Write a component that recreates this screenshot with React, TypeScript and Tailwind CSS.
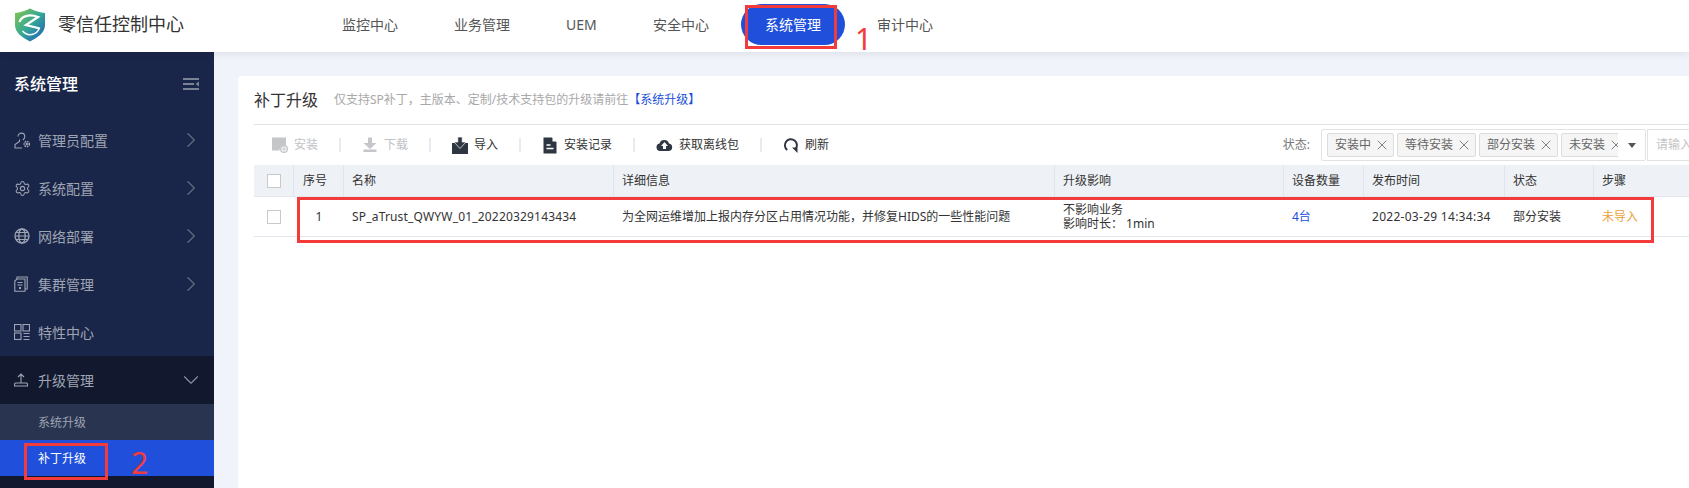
import { ChevronDown, ChevronRight, Settings, X } from 'lucide-react'
import type { ReactNode } from 'react'

const navItems = ['监控中心', '业务管理', 'UEM', '安全中心', '系统管理', '审计中心']
const tags = ['安装中', '等待安装', '部分安装', '未安装']

function Logo() {
  return (
    <svg width="32" height="34" viewBox="0 0 32 34" className="shrink-0">
      <defs>
        <linearGradient id="shield" x1="0" y1="0" x2="1" y2="1">
          <stop offset="0" stopColor="#86c648" />
          <stop offset="0.5" stopColor="#35a896" />
          <stop offset="1" stopColor="#1c58bd" />
        </linearGradient>
      </defs>
      <path d="M1 5 C6 4.5 11 3 16 0.5 C21 3 26 4.5 31 5 L31 17 C31 25 23 30 16 33.5 C9 30 1 25 1 17 Z" fill="url(#shield)" />
      <path d="M5.5 14 C7 8.5 15 5.5 24 9 L12 17 L26 20.5" fill="none" stroke="#fff" strokeWidth="2.3" />
      <path d="M25 21 C22 27 14 29 8.5 23" fill="none" stroke="#fff" strokeWidth="1.5" />
    </svg>
  )
}

function AdminIcon() {
  return (
    <svg width="17" height="17" viewBox="0 0 17 17" fill="none" stroke="currentColor" strokeWidth="1.1">
      <path d="M4 4.5 A3.4 3.4 0 0 1 10.8 4.5 C10.8 6 10 7 9 8" />
      <path d="M5.5 7.5 L5.5 9.5 L1 12.5 L1 16 L8 16" />
      <circle cx="12.8" cy="12" r="2.6" strokeDasharray="1.6 0.8" strokeWidth="1.5" />
      <circle cx="12.8" cy="12" r="0.7" />
    </svg>
  )
}

function GlobeIcon() {
  return (
    <svg width="16" height="16" viewBox="0 0 16 16" fill="none" stroke="currentColor" strokeWidth="1.3">
      <circle cx="8" cy="8" r="7" />
      <ellipse cx="8" cy="8" rx="3.2" ry="7" />
      <path d="M1 8 H15 M2 4.5 H14 M2 11.5 H14" strokeWidth="1.1" />
    </svg>
  )
}

function ClusterIcon() {
  return (
    <svg width="14" height="16" viewBox="0 0 14 16" fill="none" stroke="currentColor" strokeWidth="1.1">
      <path d="M3 3 L3 1 L13.2 1 L13.2 13 L11 13" />
      <path d="M3 3 H11 V15.2 H0.8 V5 Z" />
      <path d="M3.5 6.5 H8.5 M3.5 9 H8.5" />
      <rect x="5" y="11" width="2" height="2" fill="currentColor" stroke="none" />
    </svg>
  )
}

function FeatureIcon() {
  return (
    <svg width="16" height="16" viewBox="0 0 16 16" fill="none" stroke="currentColor" strokeWidth="1.1">
      <rect x="0.5" y="0.5" width="6.5" height="6.5" />
      <rect x="9" y="0.5" width="6.5" height="6.5" />
      <rect x="0.5" y="9" width="6.5" height="6.5" />
      <path d="M9.5 9.5 H15.5 M9.5 12.5 H15.5 M9.5 15.5 H15.5" />
    </svg>
  )
}

function UploadIcon() {
  return (
    <svg width="14" height="14" viewBox="0 0 14 14" fill="none" stroke="currentColor" strokeWidth="1.1">
      <path d="M7 10 L7 1 M4 4 L7 1 L10 4" />
      <path d="M0.5 13 V11.5 C0.5 10.5 1 10 2 10 H12 C13 10 13.5 10.5 13.5 11.5 V13 Z" />
    </svg>
  )
}

function CollapseIcon() {
  return (
    <svg width="16" height="12" viewBox="0 0 16 12" fill="#7b8295">
      <rect x="0" y="0" width="16" height="2" />
      <rect x="0" y="5" width="11" height="2" />
      <rect x="0" y="10" width="16" height="2" />
      <path d="M16 3.5 L12.5 6 L16 8.5 Z" />
    </svg>
  )
}

function InstallIcon() {
  return (
    <svg width="16" height="16" viewBox="0 0 16 16">
      <path d="M0 0.5 H14 V8.5 A5 5 0 0 0 7.5 13.5 H0 Z" fill="#c4c6c9" />
      <circle cx="12" cy="12" r="3.3" fill="none" stroke="#c4c6c9" strokeWidth="1.4" />
      <path d="M10.2 12 H13.8 M12 10.2 V13.8" stroke="#c4c6c9" strokeWidth="1.2" />
    </svg>
  )
}

function DownloadIcon() {
  return (
    <svg width="16" height="16" viewBox="0 0 16 16" fill="#c4c6c9">
      <path d="M6 0.5 H10 V6 H14.5 L8 12 L1.5 6 H6 Z" />
      <rect x="1.5" y="12.5" width="13" height="2.5" />
    </svg>
  )
}

function ImportIcon() {
  return (
    <svg width="16" height="17" viewBox="0 0 16 17" fill="#2e3642">
      <path d="M0 6 H5 L8 10 L11 6 H16 V17 H0 Z" />
      <path d="M5.8 0 H10.2 V5 H14 L8 11.5 L2 5 H5.8 Z" stroke="#fff" strokeWidth="0.7" />
    </svg>
  )
}

function RecordIcon() {
  return (
    <svg width="16" height="17" viewBox="0 0 16 17">
      <path d="M1.5 0.5 H10 L14.5 5 V16.5 H1.5 Z" fill="#2e3642" />
      <path d="M4.5 8 H8.5 M4.5 11.5 H11.5" stroke="#fff" strokeWidth="1.4" />
      <path d="M10.5 0.5 L14.5 4.5 H10.5 Z" fill="#fff" />
    </svg>
  )
}

function CloudIcon() {
  return (
    <svg width="17" height="16" viewBox="0 0 17 16">
      <path d="M4 14 A3.8 3.8 0 0 1 3.5 6.5 A5 5 0 0 1 13 6.5 A3.8 3.8 0 0 1 13 14 Z" fill="#2e3642" />
      <path d="M8.5 5 L12 9 H10 V12 H7 V9 H5 Z" fill="#fff" />
    </svg>
  )
}

function RefreshIcon() {
  return (
    <svg width="16" height="16" viewBox="0 0 16 16" fill="none">
      <path d="M4.2 13 A6 6 0 1 1 12.6 12" stroke="#2e3642" strokeWidth="2" />
      <path d="M9 10.5 H14.5 V16 Z" fill="#2e3642" />
    </svg>
  )
}

function SideItem({ icon, label, open }: { icon: ReactNode; label: string; open?: boolean }) {
  return (
    <div className={`h-12 flex items-center text-[14px] text-[#9fa4b2] ${open ? 'bg-[#12182e]' : ''}`}>
      <div className="w-[38px] pl-[14px] flex items-center shrink-0">{icon}</div>
      <span className="flex-1">{label}</span>
      {open ? (
        <ChevronDown size={26} strokeWidth={1} className="mr-[10px] text-[#8c91a0]" />
      ) : label !== '特性中心' ? (
        <ChevronRight size={26} strokeWidth={1} className="mr-[10px] text-[#666d80]" />
      ) : null}
    </div>
  )
}

function ToolItem({ icon, label, disabled }: { icon: ReactNode; label: string; disabled?: boolean }) {
  return (
    <div className={`flex items-center gap-[6px] text-[12px] ${disabled ? 'text-[#c0c2c6]' : 'text-[#333]'}`}>
      {icon}
      <span>{label}</span>
    </div>
  )
}

function Sep() {
  return <div className="w-[2px] h-[14px] bg-[#e8ebef] mx-[21px]" />
}

function Checkbox() {
  return <div className="w-[14px] h-[14px] border border-[#c9c9c9] bg-white" />
}

export default function App() {
  return (
    <div
      className="relative w-[1689px] h-[488px] overflow-hidden flex flex-col bg-[#f0f3fa] text-[#333]"
      style={{ fontFamily: '"Noto Sans", "Noto Sans CJK SC", sans-serif' }}
    >
      <header className="h-[52px] shrink-0 bg-white flex items-center shadow-[0_2px_8px_rgba(0,0,0,0.08)] relative z-10">
        <div className="w-[318px] pl-[14px] -mt-[3px] flex items-center gap-[12px] shrink-0">
          <Logo />
          <span className="text-[18px] text-[#333]">零信任控制中心</span>
        </div>
        <nav className="flex items-center gap-2 -mt-[3px]">
          {navItems.map((item) =>
            item === '系统管理' ? (
              <div key={item} className="h-[41px] px-6 rounded-[21px] bg-[#2050db] text-white text-[14px] flex items-center">
                {item}
              </div>
            ) : (
              <div key={item} className="h-[41px] px-6 text-[#555] text-[14px] flex items-center">
                <span className={item === 'UEM' ? 'w-[31px]' : ''}>{item}</span>
              </div>
            ),
          )}
        </nav>
      </header>

      <div className="flex-1 flex min-h-0">
        <aside className="w-[214px] shrink-0 bg-[#1a2649] flex flex-col">
          <div className="h-[64px] pl-[14px] pr-[15px] flex items-center justify-between shrink-0">
            <span className="text-[16px] font-medium text-white">系统管理</span>
            <CollapseIcon />
          </div>
          <SideItem icon={<AdminIcon />} label="管理员配置" />
          <SideItem icon={<Settings size={17} strokeWidth={1.5} />} label="系统配置" />
          <SideItem icon={<GlobeIcon />} label="网络部署" />
          <SideItem icon={<ClusterIcon />} label="集群管理" />
          <SideItem icon={<FeatureIcon />} label="特性中心" />
          <SideItem icon={<UploadIcon />} label="升级管理" open />
          <div className="h-9 pl-[38px] pt-px flex items-center bg-[#293450] text-[12px] text-[#9fa4b2]">系统升级</div>
          <div className="h-9 pl-[38px] pt-px flex items-center bg-[#2050db] text-[12px] text-white">补丁升级</div>
          <div className="flex-1 bg-[#12182e]" />
        </aside>

        <main className="flex-1 min-w-0 pl-6 pt-6">
          <div className="h-full bg-white rounded-tl-[4px] pl-4 overflow-hidden">
            <div className="h-[49px] flex items-center border-b border-[#e3e3e3]">
              <span className="text-[16px] text-[#333]">补丁升级</span>
              <span className="ml-4 text-[12px] text-[#a8a8a8]">
                仅支持SP补丁，主版本、定制/技术支持包的升级请前往
                <span className="text-[#2050db]">【系统升级】</span>
              </span>
            </div>

            <div className="h-[40px] pl-[18px] flex items-center">
              <ToolItem icon={<InstallIcon />} label="安装" disabled />
              <Sep />
              <ToolItem icon={<DownloadIcon />} label="下载" disabled />
              <Sep />
              <ToolItem icon={<ImportIcon />} label="导入" />
              <Sep />
              <ToolItem icon={<RecordIcon />} label="安装记录" />
              <Sep />
              <ToolItem icon={<CloudIcon />} label="获取离线包" />
              <Sep />
              <ToolItem icon={<RefreshIcon />} label="刷新" />

              <div className="ml-auto flex items-center shrink-0">
                <span className="text-[12px] text-[#777] mr-[11px]">状态:</span>
                <div className="w-[325px] h-8 border border-[#e3e3e3] rounded-[2px] flex items-center pl-[5px]">
                  <div className="w-[291px] flex items-center gap-[3px] overflow-hidden">
                    {tags.map((tag) => (
                      <div
                        key={tag}
                        className="h-6 pl-[7px] pr-[3px] shrink-0 flex items-center gap-[3px] bg-[#f5f5f5] border border-[#dcdcdc] rounded-[2px] text-[12px] text-[#666]"
                      >
                        {tag}
                        <X size={16} strokeWidth={1.1} className="text-[#555]" />
                      </div>
                    ))}
                  </div>
                  <svg width="8" height="5" viewBox="0 0 8 5" className="ml-[10px]" fill="#555">
                    <path d="M0 0 H8 L4 5 Z" />
                  </svg>
                </div>
                <div className="ml-px w-[42px] h-8 border border-r-0 border-[#e3e3e3] flex items-center pl-[8px] text-[12px] text-[#c4c4c4] overflow-hidden whitespace-nowrap">
                  请输入
                </div>
              </div>
            </div>

            <div className="h-8 flex bg-[#eef1f6] border-b border-[#e3e6ec] text-[12px] text-[#333]">
              <div className="w-10 flex items-center justify-center border-r border-[#e0e4ec]">
                <Checkbox />
              </div>
              <div className="w-[50px] flex items-center pl-[9px] border-r border-[#e0e4ec]">序号</div>
              <div className="w-[270px] flex items-center px-2 border-r border-[#e0e4ec]">名称</div>
              <div className="w-[441px] flex items-center px-2 border-r border-[#e0e4ec]">详细信息</div>
              <div className="w-[229px] flex items-center px-2 border-r border-[#e0e4ec]">升级影响</div>
              <div className="w-[80px] flex items-center px-2 border-r border-[#e0e4ec]">设备数量</div>
              <div className="w-[141px] flex items-center px-2 border-r border-[#e0e4ec]">发布时间</div>
              <div className="w-[89px] flex items-center px-2 border-r border-[#e0e4ec]">状态</div>
              <div className="flex-1 flex items-center px-2">步骤</div>
            </div>

            <div className="h-[40px] flex border-b border-[#e3e6ec] text-[12px] text-[#333]">
              <div className="w-10 flex items-center justify-center">
                <Checkbox />
              </div>
              <div className="w-[50px] flex items-center justify-center">1</div>
              <div className="w-[270px] flex items-center px-2 tracking-[0.18px]">SP_aTrust_QWYW_01_20220329143434</div>
              <div className="w-[441px] flex items-center px-2">为全网运维增加上报内存分区占用情况功能，并修复HIDS的一些性能问题</div>
              <div className="w-[229px] flex flex-col justify-center px-2 leading-[14px]">
                <span>不影响业务</span>
                <span>影响时长： 1min</span>
              </div>
              <div className="w-[80px] flex items-center px-2 text-[#2050db]">4台</div>
              <div className="w-[141px] flex items-center px-2 tracking-[0.28px]">2022-03-29 14:34:34</div>
              <div className="w-[89px] flex items-center px-2">部分安装</div>
              <div className="flex-1 flex items-center px-2 text-[#e8a33d]">未导入</div>
            </div>
          </div>
        </main>
      </div>

      {/* annotations drawn on top of the screenshot */}
      <div className="absolute z-20 left-[745px] top-[5px] w-[92px] h-[44px] border-[3px] border-[#f33b3b]" />
      <div className="absolute z-20 left-[855px] top-[24px] text-[30px] leading-[30px] text-[#f33b3b]">1</div>
      <div className="absolute z-20 left-[24px] top-[443px] w-[84px] h-[37px] border-[3px] border-[#f33b3b]" />
      <div className="absolute z-20 left-[131px] top-[446px] text-[30px] leading-[34px] text-[#f33b3b]">2</div>
      <div className="absolute z-20 left-[297px] top-[197px] w-[1357px] h-[46px] border-[3px] border-[#f33b3b]" />
    </div>
  )
}
